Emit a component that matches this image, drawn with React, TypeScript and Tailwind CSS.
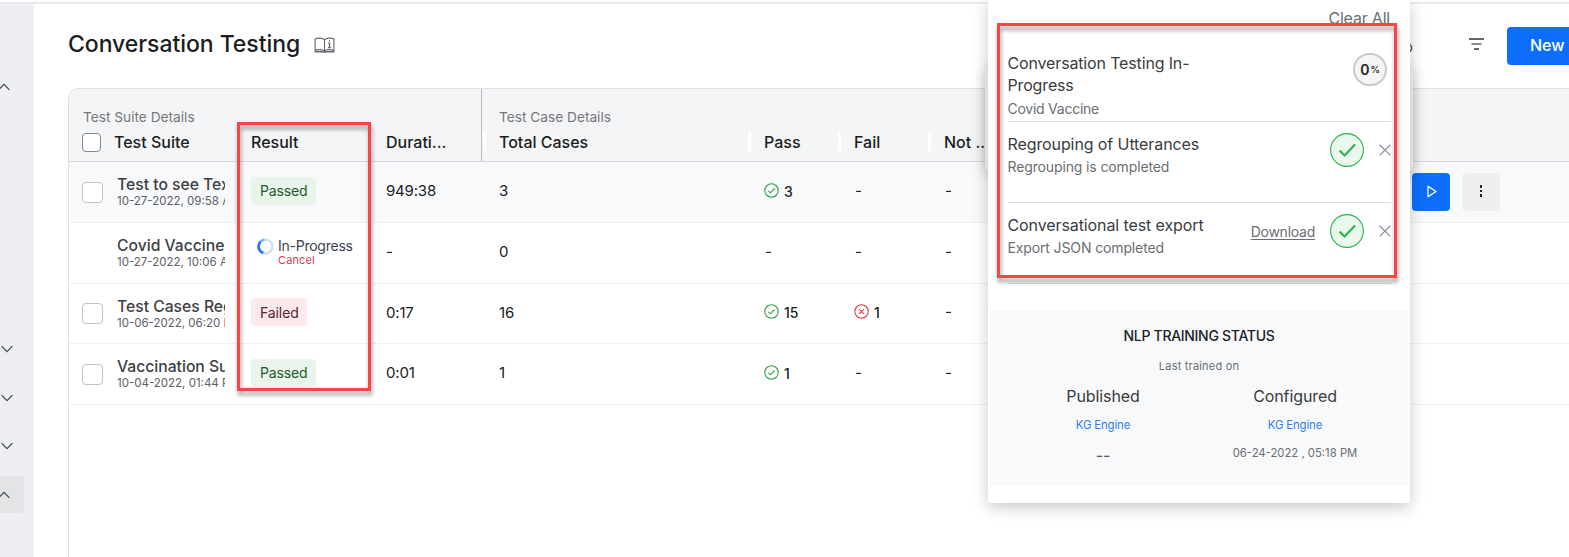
import React from "react";

const INTER = "font-['Inter','Liberation_Sans',sans-serif]";

type Row = {
  name: string;
  date: string;
  result: "Passed" | "Failed" | "In-Progress";
  duration: string;
  total: string;
  pass?: string;
  fail?: string;
  checkbox: boolean;
  active?: boolean;
};

const rows: Row[] = [
  { name: "Test to see Text", date: "10-27-2022, 09:58 AM", result: "Passed", duration: "949:38", total: "3", pass: "3", checkbox: true, active: true },
  { name: "Covid Vaccine", date: "10-27-2022, 10:06 AM", result: "In-Progress", duration: "-", total: "0", checkbox: false },
  { name: "Test Cases Reg", date: "10-06-2022, 06:20 PM", result: "Failed", duration: "0:17", total: "16", pass: "15", fail: "1", checkbox: true },
  { name: "Vaccination Suite", date: "10-04-2022, 01:44 PM", result: "Passed", duration: "0:01", total: "1", pass: "1", checkbox: true },
];

function Chevron({ up = false }: { up?: boolean }) {
  return (
    <svg width="12" height="8" viewBox="0 0 12 8" fill="none" stroke="#3f4550" strokeWidth="1.2" className="block">
      <path d={up ? "M0.6 6.8 6 1.4l5.4 5.4" : "M0.6 1.2 6 6.6l5.4-5.4"} />
    </svg>
  );
}

function Sidebar() {
  return (
    <div className="flex h-full w-[34px] shrink-0 flex-col items-start bg-[#eeeff2]">
      <div className="-ml-[2px] mt-[79px]"><Chevron up /></div>
      <div className="ml-[0.5px] mt-[254px]"><Chevron /></div>
      <div className="ml-[0.5px] mt-[41px]"><Chevron /></div>
      <div className="ml-[0.5px] mt-10"><Chevron /></div>
      <div className="mt-[26px] flex h-[37px] w-6 items-center rounded-r bg-[#e3e4e6]">
        <div className="-ml-[2px]"><Chevron up /></div>
      </div>
    </div>
  );
}

function PassIcon() {
  return (
    <svg width="15" height="15" viewBox="0 0 15 15" fill="none" stroke="#34a04c" strokeWidth="1.1">
      <circle cx="7.5" cy="7.5" r="6.7" />
      <path d="M4.3 7.8 6.4 9.8 10.6 5.5" />
    </svg>
  );
}

function FailIcon() {
  return (
    <svg width="15" height="15" viewBox="0 0 15 15" fill="none" stroke="#dc3a45" strokeWidth="1.1">
      <circle cx="7.5" cy="7.5" r="6.7" />
      <path d="m5.2 5.2 4.6 4.6m0-4.6-4.6 4.6" />
    </svg>
  );
}

function Spinner() {
  return (
    <svg width="17" height="17" viewBox="0 0 17 17" fill="none" strokeWidth="2.6">
      <circle cx="8.5" cy="8.5" r="6.9" stroke="#c9defd" strokeDasharray="3.2 0.4" />
      <path d="M6.2 15A6.9 6.9 0 0 1 3.6 3.6" stroke="#1f75fb" />
      <path d="M3.6 3.6A6.9 6.9 0 0 1 7.4 1.7" stroke="#7fb0fc" />
    </svg>
  );
}

function Result({ value }: { value: Row["result"] }) {
  if (value === "In-Progress") {
    return (
      <div className="-mt-[1px] flex pl-[6px]">
        <div className="mt-[1px]"><Spinner /></div>
        <div className="ml-1 flex flex-col">
          <span className="text-[14px] leading-[17px] tracking-[-0.25px] text-[#3a4350]">In-Progress</span>
          <span className="text-[11px] leading-[13px] tracking-[0.1px] text-[#dc3a5b]">Cancel</span>
        </div>
      </div>
    );
  }
  return (
    <div
      className={
        value === "Passed"
          ? "-mt-[3px] flex h-7 w-[65px] items-center rounded bg-[#e9f5eb] pl-[9px] text-[14px] tracking-[-0.15px] text-[#1c5a2c]"
          : "-mt-[3px] flex h-7 w-14 items-center rounded bg-[#fde9eb] pl-[9px] text-[14px] tracking-[-0.1px] text-[#5c1a33]"
      }
    >
      {value}
    </div>
  );
}

function CountCell({ icon, value }: { icon: React.ReactNode; value?: string }) {
  return (
    <div className="flex w-[90px] shrink-0 items-center">
      {value ? (
        <>
          <span className="-mt-[4px]">{icon}</span>
          <span className="-mt-[2px] ml-[5px] text-[14px] font-medium text-[#202124]">{value}</span>
        </>
      ) : (
        <span className="-mt-[2px] pl-[1px]">-</span>
      )}
    </div>
  );
}

function TableRow({ row }: { row: Row }) {
  return (
    <div
      className={
        row.active
          ? "flex h-[61px] items-center border-b border-[#f0f1f3] bg-[#f8f9fb] pl-[13px] text-[15px] text-[#202124]"
          : "flex h-[60.7px] items-center border-b border-[#f0f1f3] pl-[13px] text-[15px] text-[#202124]"
      }
    >
      <div className="w-[35px] shrink-0">
        {row.checkbox && <div className="h-[21px] w-[21px] rounded border-[1.5px] border-[#bfc3c8] bg-white" />}
      </div>
      <div className="-mt-[1px] w-[108px] shrink-0 overflow-hidden whitespace-nowrap">
        <div className="text-[15.7px] font-medium leading-[19px] text-[#3c3f44]">{row.name}</div>
        <div className="text-[11.5px] leading-[14px] text-[#5b6067]">{row.date}</div>
      </div>
      <div className="ml-[26px] w-[135px] shrink-0"><Result value={row.result} /></div>
      <div className="-mt-[1px] w-[113px] shrink-0 tracking-[-0.2px]">{row.duration}</div>
      <div className="-mt-[1px] w-[265px] shrink-0">{row.total}</div>
      <CountCell icon={<PassIcon />} value={row.pass} />
      <CountCell icon={<FailIcon />} value={row.fail} />
      <div className="-mt-[2px] pl-[1px]">-</div>
      {row.active && (
        <div className="ml-auto mr-[69px] flex gap-3">
          <div className="flex h-[38px] w-[38px] items-center justify-center rounded bg-[#0d6efd]">
            <svg width="10" height="13" viewBox="0 0 10 13" fill="none" stroke="#fff" strokeWidth="1.3" strokeLinejoin="round" className="-mt-[2px] ml-[1px]">
              <path d="M1 1.2v10.6l8-5.3z" />
            </svg>
          </div>
          <div className="flex h-[38px] w-[38px] flex-col items-center justify-center gap-[2px] rounded bg-[#eeeff0] pb-[2px]">
            <i className="h-[3px] w-[2.5px] bg-[#222]" />
            <i className="h-[2px] w-[2.5px] bg-[#222]" />
            <i className="h-[3px] w-[2.5px] bg-[#222]" />
          </div>
        </div>
      )}
    </div>
  );
}

function Head({ width, label }: { width: string; label: string }) {
  return (
    <div className={`flex shrink-0 items-center ${width}`}>
      <i className="mr-[13px] h-[18px] w-[3px] shrink-0 bg-white" />
      <span className="-mt-[1px]">{label}</span>
    </div>
  );
}

function TableHeader() {
  return (
    <div className="flex h-[73px] border-b border-[#d3d6da] bg-[#f4f5f7] text-[16px] font-medium text-[#1b1d21]">
      <div className="flex w-[413px] shrink-0 flex-col border-r border-[#b9bcc1] pt-[18px]">
        <div className="pl-[14px] text-[13.7px] font-normal leading-5 text-[#75787d]">Test Suite Details</div>
        <div className="mt-[3px] flex h-6 items-center pl-[13px]">
          <div className="mt-[1px] h-[19px] w-[19px] shrink-0 rounded border-[1.5px] border-[#7c8794] bg-white" />
          <div className="w-[134px] shrink-0 pl-[13px]">Test Suite</div>
          <Head width="w-[135px]" label="Result" />
          <Head width="w-[105px]" label="Durati..." />
        </div>
      </div>
      <div className="flex flex-col pt-[18px]">
        <div className="pl-[17px] text-[13.7px] font-normal leading-5 text-[#75787d]">Test Case Details</div>
        <div className="mt-[3px] flex h-6 items-center pl-[1px]">
          <Head width="w-[265px]" label="Total Cases" />
          <Head width="w-[90px]" label="Pass" />
          <Head width="w-[90px]" label="Fail" />
          <Head width="w-[90px]" label="Not ..." />
        </div>
      </div>
    </div>
  );
}

function BookIcon() {
  return (
    <svg width="21" height="16" viewBox="0 0 22 17" fill="none" stroke="#66696f" strokeWidth="1.2">
      <path d="M11 3.2C9.5 1 4.5.5 1 2.2v12C4 13 9 13 11 14.800 13 13 18 13 21 14.200V2.200C17.500.5 12.500 1 11 3.200V14.800" />
      <path d="M.5 15.600h9l1.500.6 1.500-.6h9" strokeWidth="1.600" />
      <path d="M15 6.600h1.400V11M14.600 11.200h3.400M15.600 4h1.300" strokeWidth="1.300" />
    </svg>
  );
}

function DoneIcon() {
  return (
    <svg width="34" height="34" viewBox="0 0 34 34" fill="none">
      <circle cx="17" cy="17" r="16.400" fill="#e9f7ed" stroke="#28b14c" strokeWidth="1.100" />
      <path d="m9.600 17.600 5 4.900 10.400-11" stroke="#2fb457" strokeWidth="2.200" />
    </svg>
  );
}

function CloseIcon() {
  return (
    <svg width="12" height="12" viewBox="0 0 12 12" fill="none" stroke="#8a94a0" strokeWidth="1.300">
      <path d="m.6.8 10.800 10.600M11.400.8.600 11.400" />
    </svg>
  );
}

function Task({ title, note, download = false }: { title: string; note: string; download?: boolean }) {
  return (
    <div className="flex h-[81px] border-b border-[#dcdddf] pt-[11px]">
      <div className="flex-1">
        <div className="text-[16px] leading-[23px] tracking-[-0.1px] text-[#3a3c40]">{title}</div>
        <div className="text-[14px] leading-[22px] tracking-[-0.13px] text-[#6a6e73]">{note}</div>
      </div>
      <div className="flex h-[35px] items-center">
        {download && <span className="-mt-[1px] mr-[15px] text-[14px] tracking-[-0.25px] text-[#6a6e73] underline underline-offset-2">Download</span>}
        <span className="-mt-[1px]"><DoneIcon /></span>
        <span className="-mt-[1px] ml-[15px]"><CloseIcon /></span>
      </div>
    </div>
  );
}

function StatusPanel() {
  return (
    <div className="absolute left-[988px] top-0 h-[503px] w-[422px] rounded-b bg-white shadow-[0_4px_16px_rgba(0,0,0,0.22)]">
      <div className="flex h-[28px] justify-end pr-[20px] pt-[7px] text-[16px] leading-[22px] tracking-[-0.2px] text-[#6a6e73]">Clear All</div>
      <div className="ml-[19.5px] mr-[19px]">
        <div className="flex h-[94px] items-start justify-between border-b border-[#dcdddf] pt-[24px]">
          <div className="w-[200px]">
            <div className="text-[16px] leading-[22px] tracking-[-0.15px] text-[#3a3c40]">Conversation Testing In-Progress</div>
            <div className="text-[14px] leading-[25px] tracking-[-0.25px] text-[#6a6e73]">Covid Vaccine</div>
          </div>
          <div className="mr-1 mt-[1px] flex h-[33px] w-[34px] items-center justify-center rounded-full border-2 border-[#cacaca] bg-[#f5f5f5] pb-[1px] text-[14px] font-semibold text-[#222]">
            0<span className="ml-[1px] mt-[2px] text-[9.5px] font-medium">%</span>
          </div>
        </div>
        <Task title="Regrouping of Utterances" note="Regrouping is completed" />
        <Task title="Conversational test export" note="Export JSON completed" download />
      </div>
      <div className="mx-[2px] mt-[26px] h-[176px] bg-[#f8f9fb] pt-[16px] text-center">
        <div className="text-[14px] font-medium leading-5 tracking-[-0.3px] text-[#202226]">NLP TRAINING STATUS</div>
        <div className="mt-[11px] text-[11px] leading-[18px] tracking-[0.2px] text-[#6a6e73]">Last trained on</div>
        <div className="flex justify-center">
          <div className="w-[192px] pt-[9px]">
            <div className="text-[16px] leading-[24px] tracking-[-0.1px] text-[#3a3c40]">Published</div>
            <div className="mt-[8px] text-[11.300px] leading-[18px] tracking-[-0.1px] text-[#2b7bf6]">KG Engine</div>
            <div className="mt-[11px] text-[16px] leading-[20px] text-[#55585e]">--</div>
          </div>
          <div className="w-[192px] pt-[9px]">
            <div className="text-[16px] leading-[24px] tracking-[-0.1px] text-[#3a3c40]">Configured</div>
            <div className="mt-[8px] text-[11.300px] leading-[18px] tracking-[-0.1px] text-[#2b7bf6]">KG Engine</div>
            <div className="mt-[10px] text-[11.300px] leading-[18px] text-[#6a6e73]">06-24-2022 , 05:18 PM</div>
          </div>
        </div>
      </div>
    </div>
  );
}

export default function App() {
  return (
    <div className={`relative flex h-[557px] w-[1569px] flex-col overflow-hidden bg-white ${INTER}`}>
      <div className="h-1 shrink-0 border-b-2 border-[#e9eaeb] bg-white" />
      <div className="flex h-[553px]">
        <Sidebar />
        <main className="flex w-[1535px] flex-col pl-[34px]">
          <div className="flex h-[84px] items-center">
            <h1 className="-mt-1 text-[23px] font-medium leading-7 tracking-[-0.05px] text-[#1b1d21]">Conversation Testing</h1>
            <div className="-mt-[3px] ml-[14px]"><BookIcon /></div>
            <div className="ml-auto mr-[56px] text-[14px] text-[#3a3c40]">o</div>
            <svg width="15" height="12" viewBox="0 0 15 12" className="-mt-1 mr-[23px]" strokeWidth="1.300">
              <path d="M0 1h15M5 11h5" stroke="#33363a" />
              <path d="M2.500 6h10" stroke="#7d8084" strokeWidth="1.800" />
            </svg>
            <div className="-mt-[1px] flex h-[38px] w-[62px] items-center rounded-l bg-[#0d6efd] pb-[1px] pl-[23px] text-[16px] font-medium text-white">New</div>
          </div>
          <div className="flex-1 overflow-hidden rounded-tl-[10px] border-l border-t border-[#dfe1e4]">
            <TableHeader />
            {rows.map((row) => <TableRow key={row.name} row={row} />)}
          </div>
        </main>
      </div>
      <div className="absolute left-[985px] top-[64px] h-[108px] w-[428px] rounded-md bg-[#f4f4f5] shadow-[0_4px_14px_rgba(0,0,0,0.2)]" />
      <StatusPanel />
      <div className="absolute left-[237px] top-[122px] h-[269px] w-[134px] border-[3px] border-[#fb4444] drop-shadow-[1px_4px_2px_rgba(0,0,0,0.4)]" />
      <div className="absolute left-[997px] top-[23px] h-[255px] w-[400px] border-[3px] border-[#fb4444] drop-shadow-[1px_4px_2px_rgba(0,0,0,0.4)]" />
    </div>
  );
}
